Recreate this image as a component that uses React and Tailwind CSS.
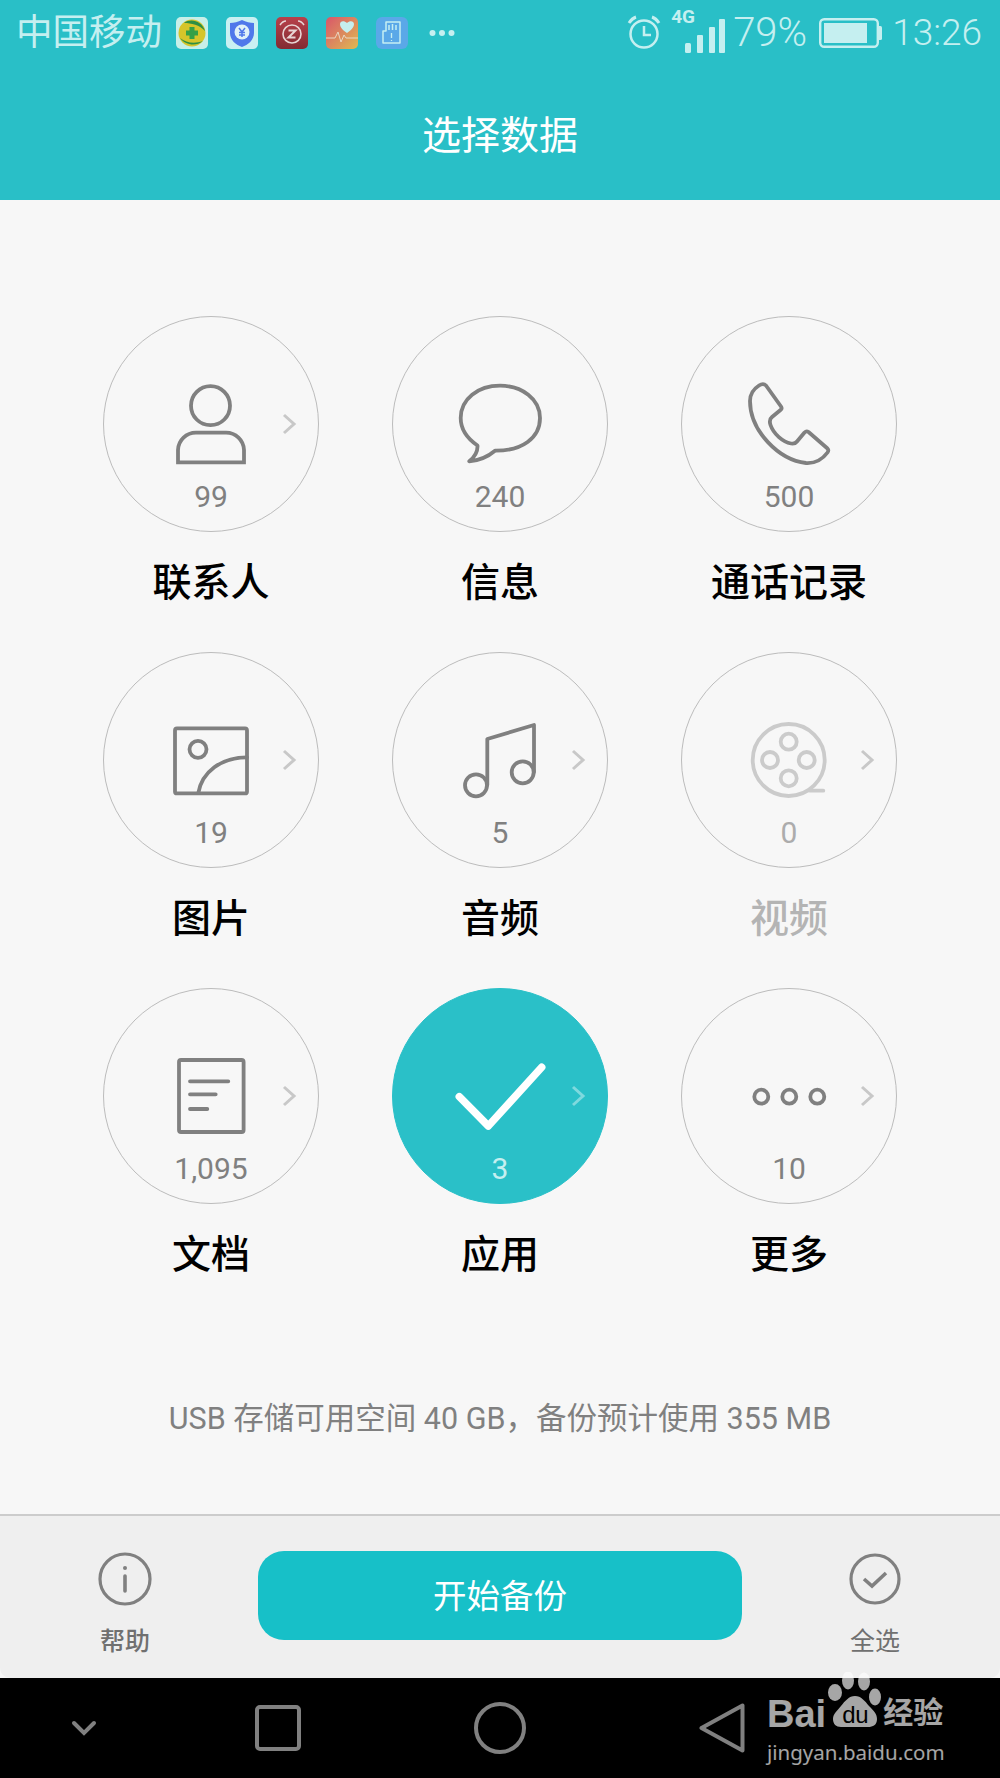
import React from 'react';

const items = [
  { label: '联系人', count: '99', icon: 'person', arrow: true },
  { label: '信息', count: '240', icon: 'chat' },
  { label: '通话记录', count: '500', icon: 'phone' },
  { label: '图片', count: '19', icon: 'image', arrow: true },
  { label: '音频', count: '5', icon: 'music', arrow: true },
  { label: '视频', count: '0', icon: 'film', arrow: true, disabled: true },
  { label: '文档', count: '1,095', icon: 'doc', arrow: true },
  { label: '应用', count: '3', icon: 'check', arrow: true, active: true },
  { label: '更多', count: '10', icon: 'more', arrow: true },
];

function ItemIcon({ name }) {
  const stroke = name === 'film' ? '#cbcbcb' : name === 'check' ? '#ffffff' : '#808080';
  return (
    <svg
      className="w-[100px] h-[100px] shrink-0 overflow-visible"
      viewBox="0 0 100 100"
      fill="none"
      stroke={stroke}
      strokeWidth="3.8"
      strokeLinecap="round"
      strokeLinejoin="round"
    >
      {name === 'person' && (
        <>
          <circle cx="49.5" cy="29.7" r="19.5" />
          <path strokeLinejoin="miter" d="M17 86.3V74a18 18 0 0 1 18-17.3h30a18 18 0 0 1 18 17.3V86.3Z" />
        </>
      )}
      {name === 'chat' && (
        <path d="M45 74.7C72 75 90 62 90 42C90 23 72 9.7 50 9.7C28 9.7 10.7 23 10.7 42C10.7 54 18 63 27.5 69.5Q28 78 19.3 85.3Q34 84 45 74.7Z" />
      )}
      {name === 'phone' && (
        <path d="M20 9.5C23 7.5 25 7.5 27 9.5L42 30.5C43 32 42.8 33 41.5 34L33 41C30.5 43 30.5 46 31.5 49C34.5 58 44 66 52 67.5C55 68 56.5 67.5 58 65.5L65.5 56.5C67 55 68 55 69.5 56L88.5 72.5C89.5 73.5 89.5 75 88.5 76.5C83 84 76 87.5 67 87C40 84 11 55 11 25C11 18 14.5 13 20 9.5Z" />
      )}
      {name === 'image' && (
        <>
          <rect x="14" y="16.4" width="72" height="65" rx="2" />
          <circle cx="37" cy="37.3" r="8.5" />
          <path d="M37.3 81C41 60 60 45.3 86 45.3" />
        </>
      )}
      {name === 'music' && (
        <>
          <circle cx="26" cy="73.3" r="11" />
          <circle cx="72.7" cy="60.3" r="11" />
          <path d="M37.3 73V27L84 13V60" />
        </>
      )}
      {name === 'film' && (
        <>
          <circle cx="49.7" cy="48" r="36" />
          <circle cx="49.7" cy="29.7" r="8" />
          <circle cx="49.7" cy="66.3" r="8" />
          <circle cx="31" cy="48" r="8" />
          <circle cx="67.7" cy="48" r="8" />
          <path d="M71 78.7H84.3" />
        </>
      )}
      {name === 'doc' && (
        <>
          <rect x="18" y="12" width="64.6" height="72" rx="2" />
          <path d="M29 33.3H67.3M29 46.3H54.7M29 61H46.3" />
        </>
      )}
      {name === 'check' && <path strokeWidth="7.5" d="M9.3 48.7L38.3 78L91.7 19.3" />}
      {name === 'more' && (
        <>
          <circle cx="22.3" cy="48.7" r="7" />
          <circle cx="50.3" cy="48.7" r="7" />
          <circle cx="78.3" cy="48.7" r="7" />
        </>
      )}
    </svg>
  );
}

function DataItem({ item }) {
  const circle = item.active ? 'bg-[#2ac0c8] border-[#2ac0c8]' : 'border-[#bcbcbc]';
  const count = item.active ? 'text-[#c5eff0]' : item.disabled ? 'text-[#acacac]' : 'text-[#808080]';
  return (
    <div className="flex flex-col items-center">
      <div className={`relative w-[216px] h-[216px] rounded-full border flex flex-col items-center pt-[59px] ${circle}`}>
        <ItemIcon name={item.icon} />
        <span className={`mt-[6px] text-[30px] leading-[30px] ${count}`}>{item.count}</span>
        {item.arrow && (
          <svg
            className="absolute left-[177px] top-[95px] w-[16px] h-[24px]"
            viewBox="0 0 16 24"
            fill="none"
            stroke={item.active ? '#7fd9de' : '#c8c8c8'}
            strokeWidth="3"
          >
            <path d="M3 3L13 12L3 21" />
          </svg>
        )}
      </div>
      <span className={`mt-[26px] text-[39px] leading-[50px] font-medium ${item.disabled ? 'text-[#b4b4b4]' : 'text-black'}`}>
        {item.label}
      </span>
    </div>
  );
}

function AppIcons() {
  return (
    <div className="flex items-center gap-[18px] ml-[14px]">
      <svg className="w-[32px] h-[32px]" viewBox="0 0 32 32">
        <rect width="32" height="32" rx="5" fill="#c8efe8" />
        <circle cx="16" cy="16" r="13.5" fill="#d6c52a" />
        <path d="M8 6C15 1 26 4 29 14C24 8 15 6 8 6Z" fill="#2e8f45" />
        <path d="M4 21C9 28 20 30 27 24C19 27 10 26 4 21Z" fill="#2e8f45" />
        <path d="M16 10V22M10 16H22" stroke="#35a047" strokeWidth="5" />
      </svg>
      <svg className="w-[32px] h-[32px]" viewBox="0 0 32 32">
        <rect width="32" height="32" rx="5" fill="#c9f0f2" />
        <path d="M16 3C20 5 24 6 28 6V16C28 23 22 28 16 30C10 28 4 23 4 16V6C8 6 12 5 16 3Z" fill="#4f78ea" />
        <circle cx="16" cy="15" r="7.5" fill="#dff1f8" />
        <path d="M13 11L16 15L19 11M16 15V20M13 15.5H19M13 18H19" stroke="#4f78ea" strokeWidth="1.5" fill="none" />
      </svg>
      <svg className="w-[32px] h-[32px]" viewBox="0 0 32 32">
        <defs>
          <linearGradient id="alarmApp" x1="0" y1="0" x2="0" y2="1">
            <stop offset="0" stopColor="#b8414a" />
            <stop offset="1" stopColor="#822b33" />
          </linearGradient>
        </defs>
        <rect width="32" height="32" rx="5" fill="url(#alarmApp)" />
        <circle cx="16" cy="17" r="9" fill="none" stroke="#e8d5d5" strokeWidth="1.6" />
        <path d="M4 8C6 5 8 4 10 4M28 8C26 5 24 4 22 4" fill="none" stroke="#e8d5d5" strokeWidth="1.6" />
        <path d="M12.5 13.5H19.5L12.5 20.5H19.5" fill="none" stroke="#e8d5d5" strokeWidth="2" />
      </svg>
      <svg className="w-[32px] h-[32px]" viewBox="0 0 32 32">
        <defs>
          <linearGradient id="heartApp" x1="0" y1="0" x2="1" y2="1">
            <stop offset="0" stopColor="#d9566a" />
            <stop offset="1" stopColor="#deba52" />
          </linearGradient>
        </defs>
        <rect width="32" height="32" rx="5" fill="url(#heartApp)" />
        <path d="M21 16C15 12 14 9 14 7C14 4 18 3 21 6C24 3 28 4 28 7C28 9 27 12 21 16Z" fill="#c5eeee" />
        <path d="M0 21H9L12 15L15 25L18 18L20 21H32" fill="none" stroke="#e9d7c4" strokeWidth="1" />
      </svg>
      <svg className="w-[32px] h-[32px]" viewBox="0 0 32 32">
        <rect width="32" height="32" rx="6" fill="#5aa8e8" />
        <path d="M10 5H24V26H7V14H10Z" fill="none" stroke="#c5eef2" strokeWidth="1.5" strokeLinejoin="round" />
        <path d="M13 8V13M16.5 7V13M20 8V13" stroke="#c5eef2" strokeWidth="1.5" />
        <path d="M15.5 16V21M15.5 23V24" stroke="#c5eef2" strokeWidth="1.3" />
      </svg>
    </div>
  );
}

function StatusBar() {
  return (
    <div className="h-[66px] flex items-center justify-between pl-[16px] pr-[18px] text-[#c5eff0]">
      <div className="flex items-center">
        <span className="text-[36.5px] leading-[66px]">中国移动</span>
        <AppIcons />
        <svg className="ml-[21px] w-[26px] h-[8px]" viewBox="0 0 26 8" fill="currentColor">
          <circle cx="3.5" cy="4" r="3" />
          <circle cx="13" cy="4" r="3" />
          <circle cx="22.5" cy="4" r="3" />
        </svg>
      </div>
      <div className="flex items-center">
        <svg className="w-[34px] h-[36px] mb-[2px]" viewBox="0 0 34 36" fill="none" stroke="currentColor" strokeWidth="2.5">
          <circle cx="17" cy="20" r="13.5" />
          <path d="M17 12V21H24" />
          <path d="M2 9C4 6 6 4 9 3M32 9C30 6 28 4 25 3" strokeWidth="3" />
        </svg>
        <div className="relative w-[54px] h-[40px] ml-[10px]">
          <span className="absolute left-[0px] top-[-6px] text-[19px] leading-[20px] font-bold">4G</span>
          <svg className="absolute left-[14px] bottom-0 w-[40px] h-[34px]" viewBox="0 0 40 34" fill="currentColor">
            <rect x="0" y="24" width="6" height="10" rx="1.5" />
            <rect x="12" y="16" width="6" height="18" rx="1" />
            <rect x="24" y="8" width="6" height="26" rx="1" />
            <rect x="34" y="0" width="6" height="34" rx="1" />
          </svg>
        </div>
        <span className="ml-[8px] text-[40px] leading-[66px] font-light">79%</span>
        <svg className="ml-[12px] w-[63px] h-[30px]" viewBox="0 0 63 30" fill="none">
          <rect x="1.2" y="1.2" width="57.6" height="27.6" rx="4" stroke="currentColor" strokeWidth="2.4" />
          <rect x="5" y="5" width="43" height="20" fill="currentColor" />
          <path d="M60 8H61.5A1.5 1.5 0 0 1 63 9.5V20.5A1.5 1.5 0 0 1 61.5 22H60Z" fill="currentColor" />
        </svg>
        <span className="ml-[10px] text-[37px] leading-[66px] font-light">13:26</span>
      </div>
    </div>
  );
}

function BaiduMark() {
  return (
    <div className="absolute left-[767px] top-[1672px] w-[180px] h-[84px] text-white/65">
      <div className="flex items-start">
        <span className="mt-[20px] font-['Liberation_Sans'] text-[38px] leading-[44px] font-bold">Bai</span>
        <div className="relative ml-[2px] w-[54px] h-[56px]">
          <svg className="w-[54px] h-[56px]" viewBox="0 0 54 56" fill="currentColor">
            <ellipse cx="20" cy="8.5" rx="6" ry="9" />
            <ellipse cx="36" cy="9.5" rx="6" ry="9" />
            <ellipse cx="7" cy="20.5" rx="7" ry="8.5" />
            <ellipse cx="47" cy="25" rx="6" ry="8.5" />
            <path d="M27 24C33 24 37 29 41 34C46 39 49 42 49 47C49 53 45 55 40 55H13C8 55 5 52 5 47C5 42 9 39 13 34C17 29 21 24 27 24Z" />
          </svg>
          <span className="absolute left-0 right-0 top-[31px] text-center font-['Liberation_Sans'] text-[24px] leading-[24px] text-black tracking-[-0.5px]">
            du
          </span>
        </div>
        <span className="mt-[23px] ml-[1px] text-[30px] leading-[36px] font-bold">经验</span>
      </div>
      <div className="mt-[3px] text-[20.5px] leading-[26px] font-['Noto_Sans'] whitespace-nowrap">jingyan.baidu.com</div>
    </div>
  );
}

export default function App() {
  return (
    <div className="relative w-full h-[1778px] flex flex-col bg-[#f7f7f7] overflow-hidden font-[family-name:Roboto,'Noto_Sans_CJK_SC',sans-serif]">
      <header className="h-[200px] shrink-0 flex flex-col bg-[#29bfc7]">
        <StatusBar />
        <div className="flex-1 flex items-center justify-center pt-[6px] text-[39px] text-white">选择数据</div>
      </header>

      <main className="flex-1 flex flex-col pt-[116px]">
        <div className="grid grid-cols-[216px_216px_216px] gap-x-[73px] gap-y-[44px] pl-[103px]">
          {items.map((item) => (
            <DataItem key={item.label} item={item} />
          ))}
        </div>
        <p className="mt-[119px] text-center text-[30.5px] leading-[40px] text-[#808080]">USB 存储可用空间 40 GB，备份预计使用 355 MB</p>
      </main>

      <div className="h-[164px] shrink-0 flex border-t-2 border-[#cccccc] bg-[#efefef] rounded-b-[10px]">
        <div className="w-[250px] flex flex-col items-center pt-[36px]">
          <svg className="w-[54px] h-[54px]" viewBox="0 0 54 54" fill="none" stroke="#808080" strokeWidth="3.2">
            <circle cx="27" cy="27" r="25" />
            <path d="M27 24V39" strokeWidth="3.6" strokeLinecap="round" />
            <circle cx="27" cy="16" r="2" fill="#808080" stroke="none" />
          </svg>
          <span className="mt-[20px] text-[25px] leading-[32px] font-medium text-[#707070]">帮助</span>
        </div>
        <button className="ml-[8px] w-[484px] h-[89px] mt-[35px] pt-[3px] rounded-[26px] bg-[#17c0c8] text-[33.5px] text-white">开始备份</button>
        <div className="ml-[8px] w-[250px] flex flex-col items-center pt-[36px]">
          <svg className="w-[54px] h-[54px]" viewBox="0 0 54 54" fill="none" stroke="#808080" strokeWidth="3.2">
            <circle cx="27" cy="27" r="24" />
            <path d="M16 27L24 34L38 21" strokeWidth="3.6" />
          </svg>
          <span className="mt-[20px] text-[25px] leading-[32px] text-[#707070]">全选</span>
        </div>
      </div>

      <nav className="h-[100px] shrink-0 bg-black grid grid-cols-[167px_222px_222px_222px_167px] items-center justify-items-center">
        <svg className="w-[26px] h-[16px]" viewBox="0 0 26 16" fill="none" stroke="#808080" strokeWidth="4" strokeLinecap="round">
          <path d="M3 3L13 13L23 3" />
        </svg>
        <svg className="w-[46px] h-[46px]" viewBox="0 0 46 46" fill="none" stroke="#808080" strokeWidth="4">
          <rect x="2" y="2" width="42" height="42" rx="3" />
        </svg>
        <svg className="w-[52px] h-[52px]" viewBox="0 0 52 52" fill="none" stroke="#808080" strokeWidth="4">
          <circle cx="26" cy="26" r="24" />
        </svg>
        <svg className="w-[46px] h-[50px]" viewBox="0 0 46 50" fill="none" stroke="#808080" strokeWidth="4" strokeLinejoin="round">
          <path d="M2.5 25L43.5 2.5V47.5Z" />
        </svg>
      </nav>

      <BaiduMark />
    </div>
  );
}
